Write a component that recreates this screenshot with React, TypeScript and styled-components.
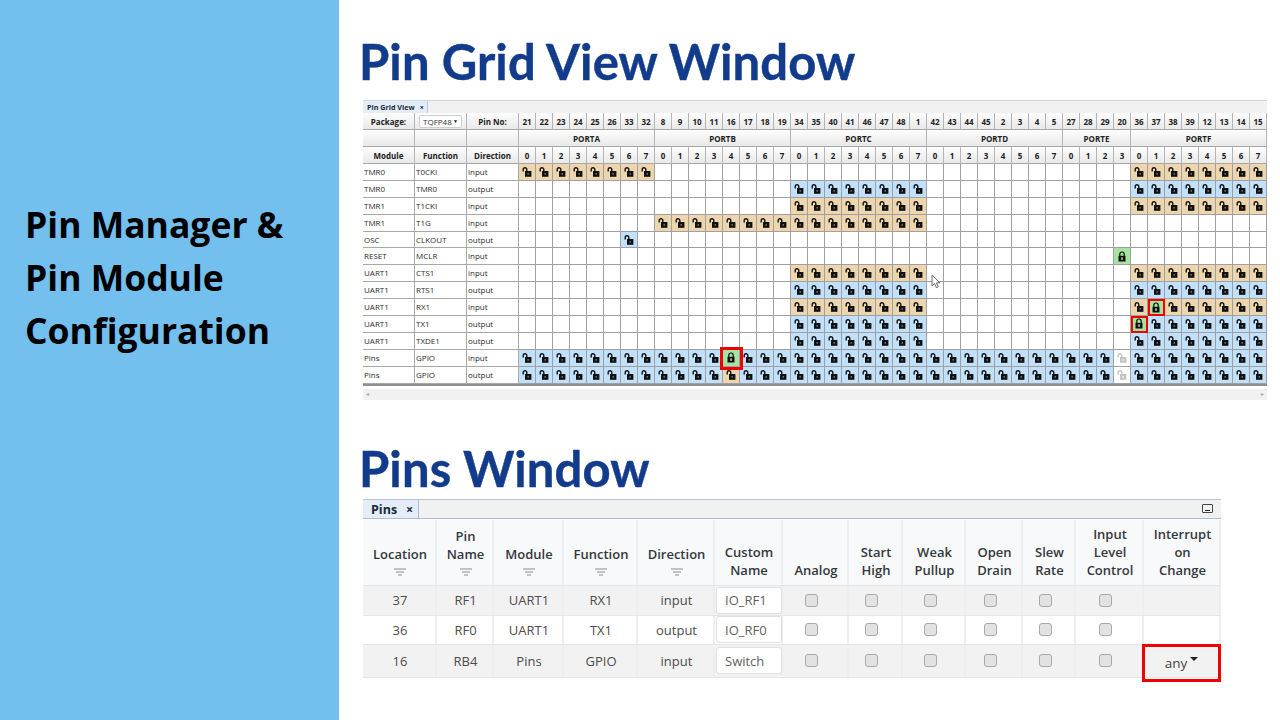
import React from "react";
import styled, { createGlobalStyle } from "styled-components";

const GlobalStyle = createGlobalStyle`
  html, body {
    margin: 0;
    padding: 0;
    background: #ffffff;
  }
`;

type Kind = "" | "in" | "out" | "lock" | "off";
type Mark = "" | "small" | "big";

const pinNumbers: number[] = [
  21, 22, 23, 24, 25, 26, 33, 32, 8, 9, 10, 11, 16, 17, 18, 19, 34, 35, 40, 41, 46, 47, 48, 1,
  42, 43, 44, 45, 2, 3, 4, 5, 27, 28, 29, 20, 36, 37, 38, 39, 12, 13, 14, 15,
];
const ports = [
  { name: "PORTA", size: 8 },
  { name: "PORTB", size: 8 },
  { name: "PORTC", size: 8 },
  { name: "PORTD", size: 8 },
  { name: "PORTE", size: 4 },
  { name: "PORTF", size: 8 },
];
const start: { [key: string]: number } = { A: 0, B: 8, C: 16, D: 24, E: 32, F: 36 };

const fillPorts = (names: string, kind: Kind): Kind[] => {
  const cells: Kind[] = new Array(44).fill("");
  names.split("").forEach((p) => {
    for (let i = 0; i < 8; i++) cells[start[p] + i] = kind;
  });
  return cells;
};

const patch = (cells: Kind[], changes: [number, Kind][]): Kind[] => {
  const next = [...cells];
  changes.forEach(([i, k]) => (next[i] = k));
  return next;
};

const allPins = (kind: Kind): Kind[] => new Array(44).fill(kind);

// row-column of the cells with a red frame round them
const marks: { [key: string]: Mark } = { "8-37": "small", "9-36": "small", "11-12": "big" };

const gridRows: { mod: string; fn: string; dir: string; cells: Kind[] }[] = [
  { mod: "TMR0", fn: "T0CKI", dir: "input", cells: fillPorts("AF", "in") },
  { mod: "TMR0", fn: "TMR0", dir: "output", cells: fillPorts("CF", "out") },
  { mod: "TMR1", fn: "T1CKI", dir: "input", cells: fillPorts("CF", "in") },
  { mod: "TMR1", fn: "T1G", dir: "input", cells: fillPorts("BC", "in") },
  { mod: "OSC", fn: "CLKOUT", dir: "output", cells: patch(allPins(""), [[6, "out"]]) },
  { mod: "RESET", fn: "MCLR", dir: "input", cells: patch(allPins(""), [[35, "lock"]]) },
  { mod: "UART1", fn: "CTS1", dir: "input", cells: fillPorts("CF", "in") },
  { mod: "UART1", fn: "RTS1", dir: "output", cells: fillPorts("CF", "out") },
  { mod: "UART1", fn: "RX1", dir: "input", cells: patch(fillPorts("CF", "in"), [[37, "lock"]]) },
  { mod: "UART1", fn: "TX1", dir: "output", cells: patch(fillPorts("CF", "out"), [[36, "lock"]]) },
  { mod: "UART1", fn: "TXDE1", dir: "output", cells: fillPorts("CF", "out") },
  { mod: "Pins", fn: "GPIO", dir: "input", cells: patch(allPins("out"), [[12, "lock"], [35, "off"]]) },
  { mod: "Pins", fn: "GPIO", dir: "output", cells: patch(allPins("out"), [[12, "in"], [35, "off"]]) },
];

const Page = styled.div`
  display: flex;
  width: 1280px;
  height: 720px;
  overflow: hidden;
  font-family: "Open Sans", "Noto Sans", sans-serif;
`;

const Sidebar = styled.aside`
  flex: 0 0 339px;
  box-sizing: border-box;
  padding: 198px 10px 0 25px;
  background: #73bfee;
`;

const SideTitle = styled.h2`
  margin: 0;
  font-family: "Open Sans", sans-serif;
  font-size: 35.5px;
  font-weight: 700;
  line-height: 53px;
  color: #000000;
`;

const Main = styled.main`
  flex: 1;
  padding: 33px 0 0 20px;
`;

const Heading = styled.h1<{ $gap: number }>`
  margin: ${(p) => p.$gap}px 0 0;
  font-family: "Lato", sans-serif;
  font-size: 49px;
  font-weight: 700;
  font-variant-ligatures: none;
  letter-spacing: 0.1px;
  line-height: 56px;
  color: #123c8b;
  -webkit-text-stroke: 0.4px #123c8b;
`;

const GridWindow = styled.section`
  margin: 11px 0 0 4px;
  width: 904px;
  border-top: 1px solid #cfd6e0;
  position: relative;
`;

const TabBar = styled.div`
  display: flex;
  height: 12px;
  background: #f1f1f1;
`;

const Tab = styled.div`
  display: flex;
  align-items: center;
  gap: 5px;
  padding: 0 3px 0 4px;
  background: #e4ecf8;
  border-right: 1px solid #b9c7dc;
  font-size: 7.2px;
  font-weight: 700;
  color: #1b2a3a;
`;

const PinGrid = styled.div`
  display: grid;
  grid-template-columns: repeat(3, 52px) repeat(44, 17px);
  grid-template-rows: repeat(3, 17px);
  grid-auto-rows: 16.9px;
  border-bottom: 2px solid #8f8f8f;
  font-size: 8px;
  color: #333333;
`;

const HeadCell = styled.div<{ $span?: number }>`
  grid-column: span ${(p) => p.$span || 1};
  display: flex;
  align-items: center;
  justify-content: center;
  box-sizing: border-box;
  border-right: 1px solid #b5b5b5;
  border-bottom: 1px solid #a8a8a8;
  background: linear-gradient(#fdfdfd, #e9e9e9);
  font-weight: 700;
  font-size: 8px;
  color: #222222;
`;

const SelectBox = styled.div`
  display: flex;
  align-items: center;
  justify-content: space-between;
  box-sizing: border-box;
  width: 43px;
  height: 13px;
  padding: 0 3px 0 3px;
  background: #ffffff;
  border: 1px solid #cfcfcf;
  border-radius: 2px;
  font-size: 8px;
  font-weight: 400;
  color: #333333;
`;

const SelectArrow = styled.span`
  font-size: 5px;
  color: #111111;
`;

const TextCell = styled.div`
  display: flex;
  align-items: center;
  box-sizing: border-box;
  padding: 0 0 1px 1px;
  border-right: 1px solid #a8a8a8;
  border-bottom: 1px solid #a8a8a8;
  font-size: 8px;
  color: #2c2c2c;
`;

const cellColors: { [key: string]: string } = {
  "": "#ffffff",
  in: "#edd5ae",
  out: "#c0e0fb",
  lock: "#a6e3a1",
  off: "#ffffff",
};

const markStyles: { [key: string]: string } = {
  "": "",
  small: "outline: 2.5px solid #f00000; outline-offset: -2px; z-index: 1;",
  big: "outline: 3px solid #f00000; outline-offset: 0; z-index: 1;",
};

const PinCell = styled.div<{ $kind: Kind; $mark: Mark }>`
  position: relative;
  display: flex;
  align-items: center;
  justify-content: center;
  box-sizing: border-box;
  border-right: 1px solid #a0a0a0;
  border-bottom: 1px solid #a0a0a0;
  background: ${(p) => cellColors[p.$kind]};
  ${(p) => markStyles[p.$mark]}
`;

const ScrollBar = styled.div`
  display: flex;
  align-items: center;
  justify-content: space-between;
  height: 11px;
  margin-top: 3px;
  padding: 0 3px;
  background: #f1f1f1;
  font-size: 6px;
  color: #a5a5a5;
`;

const Cursor = styled.svg`
  position: absolute;
  left: 568px;
  top: 173px;
`;

const PinsWindow = styled.section`
  margin: 3px 0 0 4px;
  width: 858px;
  border-top: 1px solid #b8c6d8;
`;

const PinsTabBar = styled.div`
  display: flex;
  justify-content: space-between;
  align-items: center;
  height: 18px;
  margin-bottom: 1px;
  background: #f1f1f1;
  border-bottom: 1px solid #a9bdd8;
`;

const PinsTab = styled.div`
  display: flex;
  align-items: center;
  align-self: stretch;
  gap: 9px;
  padding: 2px 5px 0 8px;
  background: #e4ecf8;
  border-right: 1px solid #a9bdd8;
  font-size: 12.5px;
  font-weight: 700;
  color: #1b2a3a;
`;

const Minimize = styled.div`
  position: relative;
  width: 9px;
  height: 7px;
  margin-right: 8px;
  background: #f4f4f4;
  border: 1px solid #444444;
  border-radius: 1px;
  &::after {
    content: "";
    position: absolute;
    left: 2px;
    right: 2px;
    bottom: 1px;
    height: 1px;
    background: #222222;
  }
`;

const pinsColumns = "74px 57px 70px 74px 77px 68px 66px 54px 63px 57px 53px 68px 77px";

const PinsRow = styled.div<{ $height: number; $shade: boolean }>`
  display: grid;
  grid-template-columns: ${pinsColumns};
  height: ${(p) => p.$height}px;
  background: ${(p) => (p.$shade ? "#f2f2f2" : "#ffffff")};
  border-bottom: 1px solid #e6e6e6;
  box-sizing: border-box;
`;

const PinsHead = styled.div`
  display: flex;
  flex-direction: column;
  align-items: center;
  justify-content: flex-end;
  padding: 0 0 6px 2px;
  box-sizing: border-box;
  background: #f8f9fb;
  border-right: 2px solid #eeeeee;
  font-size: 13px;
  font-weight: 600;
  line-height: 18px;
  text-align: center;
  color: #33383d;
`;

const FilterIcon = styled.svg`
  margin-top: 5px;
  margin-bottom: 3px;
`;

const PinsCell = styled.div`
  position: relative;
  display: flex;
  align-items: center;
  justify-content: center;
  box-sizing: border-box;
  padding-left: 2px;
  border-right: 2px solid #eeeeee;
  font-size: 13px;
  color: #4c4c4c;
`;

const NameInput = styled.div`
  display: flex;
  flex: 0 0 66px;
  align-items: center;
  box-sizing: border-box;
  height: 27px;
  padding-left: 8px;
  background: #ffffff;
  border: 1px solid #e0e0e0;
  border-radius: 3px;
  font-size: 13px;
  color: #5f5f5f;
`;

const Check = styled.div`
  width: 13px;
  height: 13px;
  margin-right: 9px;
  box-sizing: border-box;
  background: #e2e2e2;
  border: 1px solid #a9a9a9;
  border-radius: 3px;
`;

const AnyBox = styled.div`
  position: absolute;
  left: -2px;
  right: -2px;
  top: -1px;
  height: 38px;
  display: flex;
  align-items: center;
  justify-content: center;
  gap: 3px;
  box-sizing: border-box;
  border: 3px solid #f00000;
  font-size: 13.5px;
  color: #444444;
`;

const Caret = styled.span`
  width: 0;
  height: 0;
  margin-bottom: 7px;
  border-left: 4px solid transparent;
  border-right: 4px solid transparent;
  border-top: 4px solid #222222;
`;

const OpenLock = ({ color = "#111111" }: { color?: string }) => (
  <svg width="10" height="10" viewBox="0 0 10 10">
    <path d="M1.2 4.6V2.6a1.8 1.8 0 0 1 3.6 0V4.2" fill="none" stroke={color} strokeWidth="1.4" />
    <rect x="3" y="4" width="6.4" height="5.8" fill={color} />
    <rect x="5.5" y="6.2" width="1.4" height="1.4" fill={color === "#111111" ? "#8a8a8a" : "#ffffff"} />
  </svg>
);

const ClosedLock = () => (
  <svg width="10" height="11" viewBox="0 0 10 11">
    <path d="M2.8 5V3.2a2.2 2.2 0 0 1 4.4 0V5" fill="none" stroke="#111111" strokeWidth="1.2" />
    <rect x="1.5" y="4.8" width="7" height="5.7" fill="#111111" />
    <rect x="4.2" y="6.4" width="1.6" height="2.4" fill="#a6e3a1" />
  </svg>
);

const LockFor = ({ kind }: { kind: Kind }) => {
  if (kind === "") return null;
  if (kind === "lock") return <ClosedLock />;
  if (kind === "off") return <OpenLock color="#c4c4c4" />;
  return <OpenLock />;
};

const Filter = () => (
  <FilterIcon width="12" height="8" viewBox="0 0 12 8">
    <path d="M0 1h12M2 4h8M4 7h4" stroke="#8c8c8c" strokeWidth="1" fill="none" />
  </FilterIcon>
);

const pinsHeaders: { lines: string[]; filter?: boolean }[] = [
  { lines: ["Location"], filter: true },
  { lines: ["Pin", "Name"], filter: true },
  { lines: ["Module"], filter: true },
  { lines: ["Function"], filter: true },
  { lines: ["Direction"], filter: true },
  { lines: ["Custom", "Name"] },
  { lines: ["Analog"] },
  { lines: ["Start", "High"] },
  { lines: ["Weak", "Pullup"] },
  { lines: ["Open", "Drain"] },
  { lines: ["Slew", "Rate"] },
  { lines: ["Input", "Level", "Control"] },
  { lines: ["Interrupt", "on", "Change"] },
];

const pinsRows = [
  { values: ["37", "RF1", "UART1", "RX1", "input"], name: "IO_RF1", height: 30, shade: true },
  { values: ["36", "RF0", "UART1", "TX1", "output"], name: "IO_RF0", height: 29, shade: false },
  { values: ["16", "RB4", "Pins", "GPIO", "input"], name: "Switch", height: 33, shade: true, any: true },
];

const App = () => {
  return (
    <Page>
      <GlobalStyle />
      <Sidebar>
        <SideTitle>
          Pin Manager &amp;
          <br />
          Pin Module
          <br />
          Configuration
        </SideTitle>
      </Sidebar>
      <Main>
        <Heading $gap={0}>Pin Grid View Window</Heading>
        <GridWindow>
          <TabBar>
            <Tab>
              Pin Grid View <span>×</span>
            </Tab>
          </TabBar>
          <PinGrid>
            <HeadCell>Package:</HeadCell>
            <HeadCell>
              <SelectBox>
                TQFP48 <SelectArrow>▼</SelectArrow>
              </SelectBox>
            </HeadCell>
            <HeadCell>Pin No:</HeadCell>
            {pinNumbers.map((n, i) => (
              <HeadCell key={i}>{n}</HeadCell>
            ))}
            <HeadCell />
            <HeadCell />
            <HeadCell />
            {ports.map((p) => (
              <HeadCell key={p.name} $span={p.size}>
                {p.name}
              </HeadCell>
            ))}
            <HeadCell>Module</HeadCell>
            <HeadCell>Function</HeadCell>
            <HeadCell>Direction</HeadCell>
            {ports.map((p) =>
              Array.from({ length: p.size }).map((_, i) => <HeadCell key={p.name + i}>{i}</HeadCell>)
            )}
            {gridRows.map((row, r) => (
              <React.Fragment key={r}>
                <TextCell>{row.mod}</TextCell>
                <TextCell>{row.fn}</TextCell>
                <TextCell>{row.dir}</TextCell>
                {row.cells.map((kind, c) => (
                  <PinCell key={c} $kind={kind} $mark={marks[`${r}-${c}`] || ""}>
                    <LockFor kind={kind} />
                  </PinCell>
                ))}
              </React.Fragment>
            ))}
          </PinGrid>
          <ScrollBar>
            <span>◂</span>
            <span>▸</span>
          </ScrollBar>
          <Cursor width="11" height="15" viewBox="0 0 11 15">
            <path d="M1 1v11l2.6-2.4 1.8 4 1.8-.8-1.8-3.9H9z" fill="#ffffff" stroke="#6a6a6a" strokeWidth="1" />
          </Cursor>
        </GridWindow>
        <Heading $gap={40}>Pins Window</Heading>
        <PinsWindow>
          <PinsTabBar>
            <PinsTab>
              Pins <span>×</span>
            </PinsTab>
            <Minimize />
          </PinsTabBar>
          <PinsRow $height={66} $shade={false}>
            {pinsHeaders.map((h) => (
              <PinsHead key={h.lines.join("")}>
                {h.lines.map((l) => (
                  <div key={l}>{l}</div>
                ))}
                {h.filter && <Filter />}
              </PinsHead>
            ))}
          </PinsRow>
          {pinsRows.map((row) => (
            <PinsRow key={row.name} $height={row.height} $shade={row.shade}>
              {row.values.map((v, i) => (
                <PinsCell key={i}>{v}</PinsCell>
              ))}
              <PinsCell>
                <NameInput>{row.name}</NameInput>
              </PinsCell>
              {Array.from({ length: 6 }).map((_, i) => (
                <PinsCell key={i}>
                  <Check />
                </PinsCell>
              ))}
              <PinsCell>
                {row.any && (
                  <AnyBox>
                    any <Caret />
                  </AnyBox>
                )}
              </PinsCell>
            </PinsRow>
          ))}
        </PinsWindow>
      </Main>
    </Page>
  );
};

export default App;
